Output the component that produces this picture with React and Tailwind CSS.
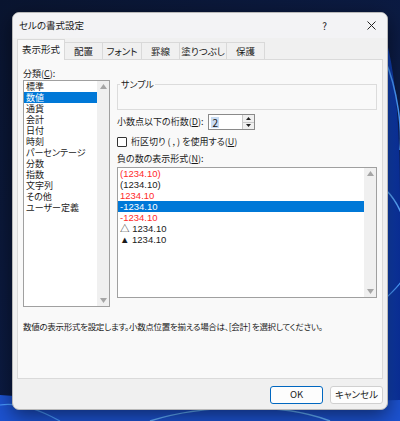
import React from 'react';

const jp = "[font-family:'Noto_Sans_CJK_JP','Noto_Sans',sans-serif] [font-feature-settings:'palt']";

const categories = ['標準', '数値', '通貨', '会計', '日付', '時刻', 'パーセンテージ', '分数', '指数', '文字列', 'その他', 'ユーザー定義'];

const negatives = [
  { text: '(1234.10)', red: true },
  { text: '(1234.10)', red: false },
  { text: '1234.10', red: true },
  { text: '-1234.10', red: false, selected: true },
  { text: '-1234.10', red: true },
  { text: '△ 1234.10', red: false },
  { text: '▲ 1234.10', red: false },
];

const tabs = [
  { label: '配置', w: 'w-[38px]' },
  { label: 'フォント', w: 'w-[39px]' },
  { label: '罫線', w: 'w-[38px]' },
  { label: '塗りつぶし', w: 'w-[47px]' },
  { label: '保護', w: 'w-[38px]' },
];

// thin vertical scrollbar with arrow glyphs
const ScrollBar = () => (
  <div className="w-[12px] h-full bg-[#f0f0f0] flex flex-col items-center justify-between py-[3px]">
    <svg width="7" height="5" viewBox="0 0 7 5"><path d="M0 5 L3.5 0 L7 5 Z" fill="#a6a6a6" /></svg>
    <svg width="7" height="5" viewBox="0 0 7 5"><path d="M0 0 L3.5 5 L7 0 Z" fill="#a6a6a6" /></svg>
  </div>
);

const Wallpaper = () => (
  <svg className="absolute inset-0" width="400" height="421" viewBox="0 0 400 421">
    <defs>
      <linearGradient id="wp" x1="0" y1="0" x2="1" y2="1">
        <stop offset="0" stopColor="#0a1530" />
        <stop offset="0.6" stopColor="#0c1c46" />
        <stop offset="1" stopColor="#1740b0" />
      </linearGradient>
      <linearGradient id="sw" x1="0" y1="0" x2="1" y2="0">
        <stop offset="0" stopColor="#1b5fe0" />
        <stop offset="1" stopColor="#0a2f9a" />
      </linearGradient>
    </defs>
    <rect width="400" height="421" fill="url(#wp)" />
    <path d="M380 20 C395 60 400 120 400 200 L400 421 L370 421 C390 320 392 200 380 20 Z" fill="url(#sw)" />
    <path d="M385 60 C398 90 402 130 400 150" stroke="#4a9bff" strokeWidth="1.5" fill="none" />
    <path d="M386 190 C396 200 400 210 402 215" stroke="#5aa8ff" strokeWidth="1.5" fill="none" />
    <path d="M384 300 C394 290 400 285 402 280" stroke="#4a9bff" strokeWidth="1.2" fill="none" />
    <path d="M0 421 L0 395 C80 400 200 405 400 400 L400 421 Z" fill="#1c52d0" />
    <path d="M150 421 C200 405 280 402 330 421" stroke="#62b0ff" strokeWidth="1.5" fill="none" />
    <path d="M0 405 C20 402 40 410 60 421" stroke="#4a9bff" strokeWidth="1.2" fill="none" />
  </svg>
);

export default function App() {
  return (
    <div className={`relative w-[400px] h-[421px] overflow-hidden ${jp} text-[9px] text-[#1a1a1a]`}>
      <Wallpaper />
      <div className="relative pt-[12px] pl-[12px]">
        <div className="w-[376px] h-[398px] rounded-[7px] bg-[#f0f0f0] border border-[#b9b9b9] shadow-[0_6px_20px_rgba(0,0,0,0.5)] flex flex-col overflow-hidden">
          {/* title bar */}
          <div className="h-[25px] bg-[#f3f3f5] flex items-center pl-[6px] shrink-0">
            <span className="text-[9.5px] leading-none">セルの書式設定</span>
            <span className="ml-auto mr-[40px] text-[10px] leading-none">?</span>
            <svg className="mr-[11px]" width="9" height="9" viewBox="0 0 9 9">
              <path d="M0.5 0.5 L8.5 8.5 M8.5 0.5 L0.5 8.5" stroke="#222" strokeWidth="1" />
            </svg>
          </div>

          {/* tabs */}
          <div className="flex items-end h-[21px] pl-[4px] shrink-0">
            <div className="w-[48px] h-[21px] bg-[#f9f9f9] border border-b-0 border-[#d9d9d9] flex items-center justify-center text-[9.5px] relative z-10 -mb-px pb-[1px]">
              表示形式
            </div>
            {tabs.map((t) => (
              <div
                key={t.label}
                className={`${t.w} h-[17px] bg-[#f0f0f0] border border-l-0 border-b-0 border-[#d9d9d9] flex items-center justify-center text-[9.5px]`}
              >
                {t.label}
              </div>
            ))}
          </div>

          {/* panel */}
          <div className="mx-[4px] h-[320px] bg-[#f9f9f9] border border-[#dadada] flex flex-col px-[5px] shrink-0">
            <div className="flex gap-[7px]">
              {/* category column */}
              <div className="w-[87px] flex flex-col">
                <div className="h-[19px] flex items-end pb-[1px] leading-none">
                  分類(<span className="underline">C</span>):
                </div>
                <div className="mt-[1px] h-[227px] bg-white border border-[#a0a0a0] flex">
                  <div className="flex-1 flex flex-col">
                    {categories.map((c) => (
                      <div
                        key={c}
                        className={`h-[11px] leading-[11px] pl-[2px] ${c === '数値' ? 'bg-[#0078d7] text-white' : ''}`}
                      >
                        {c}
                      </div>
                    ))}
                  </div>
                  <ScrollBar />
                </div>
              </div>

              {/* right column */}
              <div className="w-[260px] flex flex-col">
                <div className="mt-[24px] h-[26px] border border-[#dcdcdc] relative">
                  <span className="absolute -top-[6px] left-[2px] bg-[#f9f9f9] px-[1px] leading-[11px]">サンプル</span>
                </div>
                <div className="mt-[4px] h-[16px] flex items-center">
                  <span>小数点以下の桁数(<span className="underline">D</span>):</span>
                  <div className="ml-[5px] w-[47px] h-[16px] bg-white border border-[#8a8a8a] flex">
                    <div className="flex-1 flex items-center pl-[2px]">
                      <span className="bg-[#c9dcf3] px-[1px] leading-[11px] text-[10px]">2</span>
                    </div>
                    <div className="w-[12px] border-l border-[#c8c8c8] flex flex-col">
                      <div className="flex-1 bg-[#f0f0f0] border-b border-[#c8c8c8] flex items-center justify-center">
                        <svg width="5" height="3" viewBox="0 0 5 3"><path d="M0 3 L2.5 0 L5 3 Z" fill="#222" /></svg>
                      </div>
                      <div className="flex-1 bg-[#f0f0f0] flex items-center justify-center">
                        <svg width="5" height="3" viewBox="0 0 5 3"><path d="M0 0 L2.5 3 L5 0 Z" fill="#222" /></svg>
                      </div>
                    </div>
                  </div>
                </div>
                <div className="mt-[6px] h-[12px] flex items-center gap-[4px]">
                  <div className="w-[10px] h-[10px] bg-white border border-[#333] rounded-[1px]" />
                  <span>桁区切り ( , ) を使用する(<span className="underline">U</span>)</span>
                </div>
                <div className="mt-[5px] h-[12px] flex items-center">
                  負の数の表示形式(<span className="underline">N</span>):
                </div>
                <div className="mt-[2px] h-[131px] bg-white border border-[#a0a0a0] flex">
                  <div className="flex-1 flex flex-col [font-family:'Liberation_Sans','Noto_Sans_CJK_JP',sans-serif] text-[9.5px]">
                    {negatives.map((n, i) => (
                      <div
                        key={i}
                        className={`h-[11px] leading-[11px] pl-[2px] ${n.selected ? 'bg-[#0078d7] text-white' : n.red ? 'text-[#ff2a2a]' : 'text-[#1a1a1a]'}`}
                      >
                        {n.text}
                      </div>
                    ))}
                  </div>
                  <ScrollBar />
                </div>
              </div>
            </div>

            <div className="mt-[15px] leading-none text-[8.5px] tracking-[-0.3px]">
              数値の表示形式を設定します。小数点位置を揃える場合は、[会計] を選択してください。
            </div>
          </div>

          {/* buttons */}
          <div className="flex justify-end gap-[7px] pr-[4px] mt-[7px]">
            <button className="w-[53px] h-[18px] bg-[#fdfdfd] border border-[#0067c0] rounded-[3px] text-[9.5px] leading-none">
              OK
            </button>
            <button className="w-[53px] h-[18px] bg-[#fdfdfd] border border-[#d0d0d0] rounded-[3px] text-[9.5px] leading-none">
              キャンセル
            </button>
          </div>
        </div>
      </div>
    </div>
  );
}
